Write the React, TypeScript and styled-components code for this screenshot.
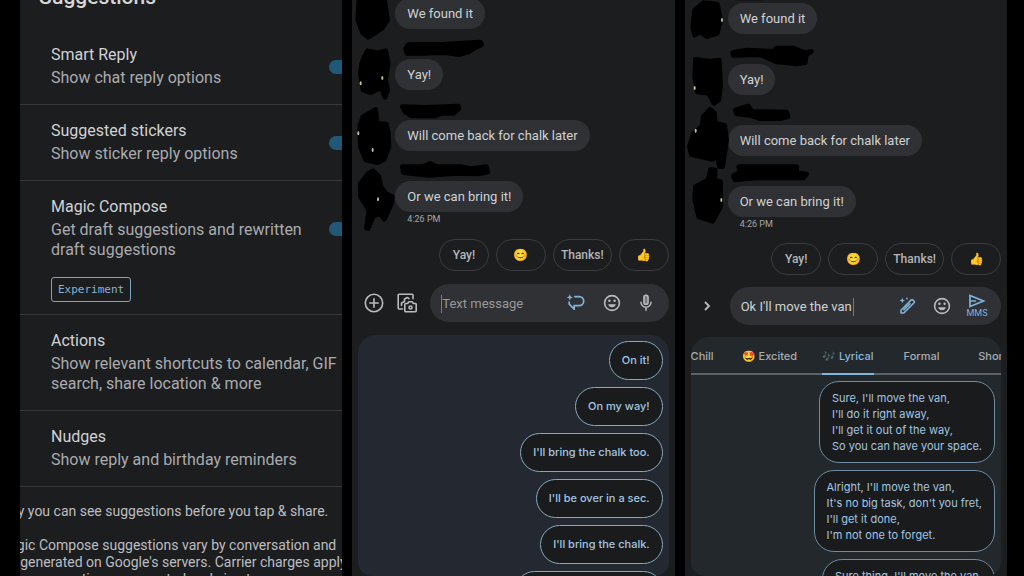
import React from "react";
import styled, { createGlobalStyle, css } from "styled-components";

const GlobalStyle = createGlobalStyle`
  *, *::before, *::after { box-sizing: border-box; }
  body { margin: 0; background: #000; }
  button, input { font: inherit; color: inherit; margin: 0; }
`;

const sans = `Roboto, "Liberation Sans", sans-serif`;
const rounded = `Inter, Roboto, sans-serif`;

const Screens = styled.main`
  display: grid;
  grid-template-columns: repeat(3, minmax(0, 1fr));
  gap: 10px;
  height: 100vh;
  padding: 0 17px 0 20px;
  overflow: hidden;
  font-family: ${sans};
`;

const Pane = styled.section`
  position: relative;
  display: flex;
  flex-direction: column;
  min-height: 0;
  overflow: hidden;
  background: #1c1d1f;
`;

/* ---------- settings ---------- */

const Heading = styled.h1`
  display: flex;
  align-items: flex-end;
  flex: none;
  height: 11px;
  margin: 0 0 18px;
  padding-left: 19px;
  font: 500 21px/28px ${sans};
  color: #d4d6d9;
`;

const Setting = styled.div<{ $tagged?: boolean }>`
  flex: none;
  padding: 16px 0 ${(p) => (p.$tagged ? 12 : 16)}px 31px;
  border-bottom: 1px solid #36383a;
`;

const SettingHead = styled.div`
  display: flex;
  align-items: center;
`;

const SettingText = styled.label`
  flex: 1;
  display: flex;
  flex-direction: column;
  gap: 3px;
  min-width: 0;
`;

const SettingTitle = styled.span`
  font-size: 16px;
  line-height: 20px;
  color: #d0d2d5;
`;

const SettingNote = styled.span`
  font-size: 16px;
  line-height: 20px;
  color: #a9abae;
`;

const Switch = styled.input`
  appearance: none;
  flex: none;
  width: 31px;
  height: 14px;
  margin-right: -18px;
  border-radius: 7px;
  background: #215877;
`;

const Tag = styled.span`
  display: inline-block;
  margin-top: 17px;
  padding: 0 6px;
  border: 1px solid #7ea3bd;
  border-radius: 3px;
  font: 11px/23px "DejaVu Sans Mono", monospace;
  color: #86b3d3;
`;

const Footnote = styled.div`
  flex: none;
  margin: 16px -60px 0 -23px;
  font-size: 14px;
  line-height: 17px;
  color: #bcbec1;
  white-space: nowrap;

  p { margin: 0 0 17px; }
`;

/* ---------- conversation ---------- */

const Thread = styled.ul<{ $scrolled: number }>`
  flex: none;
  display: flex;
  flex-direction: column;
  align-items: flex-start;
  gap: 30px;
  margin: ${(p) => -p.$scrolled}px 0 0;
  padding: 0 0 0 43px;
  list-style: none;
`;

const Bubble = styled.li`
  padding: 0 12px;
  border-radius: 16px;
  background: #303134;
  font-size: 13px;
  line-height: 31px;
  color: #cfd1d4;
`;

const Time = styled.time`
  flex: none;
  margin-top: 1px;
  padding-left: 55px;
  font-size: 9px;
  line-height: 13px;
  color: #a5a7aa;
`;

const Redaction = styled.svg`
  position: absolute;
  top: 0;
  left: 0;
  width: 322px;
  height: 234px;
  fill: #000;
  stroke: #000;
  stroke-width: 14;
  stroke-linejoin: round;
`;

const Footer = styled.div<{ $gap: number }>`
  flex: 1;
  display: flex;
  flex-direction: column;
  gap: ${(p) => p.$gap}px;
  min-height: 0;
  padding: ${(p) => p.$gap}px 6px 0;
`;

const Chips = styled.div`
  flex: none;
  display: flex;
  justify-content: flex-end;
  gap: 7px;
`;

const Chip = styled.button`
  min-width: 50px;
  height: 32px;
  padding: 0 7px;
  border: 1px solid #3a3c3f;
  border-radius: 16px;
  background: transparent;
  font: 500 12px/16px ${sans};
  color: #b4b6b9;
`;

const Composer = styled.form`
  flex: none;
  display: flex;
  align-items: center;
  gap: 13px;
  padding-left: 6px;
`;

const IconButton = styled.button<{ $width?: number; $accent?: boolean }>`
  flex: none;
  display: flex;
  flex-direction: column;
  align-items: center;
  width: ${(p) => p.$width ?? 20}px;
  padding: 0;
  border: 0;
  background: none;
  color: ${(p) => (p.$accent ? "#7fb4dc" : "#b9bbbe")};
  font: 9px/10px ${sans};

  svg { display: block; flex: none; }
`;

const Field = styled.div<{ $gap: number }>`
  flex: 1;
  display: flex;
  align-items: center;
  gap: ${(p) => p.$gap}px;
  min-width: 0;
  height: 38px;
  padding: 0 ${(p) => p.$gap - 1}px 0 11px;
  border-radius: 19px;
  background: #303134;
`;

const FieldText = styled.div`
  flex: 1;
  min-width: 0;
`;

const caretEdge = css`1px solid #77797c`;

const MessageInput = styled.input<{ $caret: "start" | "end" }>`
  width: ${(p) => (p.$caret === "start" ? "100%" : "113px")};
  height: 18px;
  padding: 0;
  border: 0;
  ${(p) => (p.$caret === "start" ? css`border-left: ${caretEdge};` : css`border-right: ${caretEdge};`)}
  outline: 0;
  background: none;
  font: 13px/18px ${sans};
  color: #cfd1d4;

  &::placeholder { color: #96989b; opacity: 1; }
`;

/* ---------- suggestion sheet ---------- */

const Sheet = styled.div<{ $tint: string }>`
  flex: 1;
  min-height: 0;
  overflow: hidden;
  border-radius: 18px 18px 14px 14px;
  background: ${(p) => p.$tint};
`;

const Replies = styled.div`
  display: flex;
  flex-direction: column;
  align-items: flex-end;
  gap: 7px;
  padding: 6px 6px 0;
`;

const Reply = styled.button`
  flex: none;
  padding: 10px 12px;
  border: 1px solid #86a8be;
  border-radius: 20px;
  background: #1a1b1d;
  font: 500 11px/17px ${rounded};
  color: #a3c6e0;
  text-align: left;
`;

const Verse = styled(Reply)`
  padding: 8px 12px;
  border-color: #6f8ca1;
  font: 11px/16px ${rounded};
  white-space: pre-line;
`;

const Tabs = styled.div`
  display: flex;
  gap: 25px;
  height: 38px;
  border-bottom: 2px solid #5b6166;
`;

const Tab = styled.button<{ $active?: boolean; $lead?: boolean }>`
  flex: none;
  min-width: 46px;
  height: 38px;
  margin-left: ${(p) => (p.$lead ? -20 : 0)}px;
  padding: 2px 0 0;
  border: 0;
  border-bottom: 2px solid ${(p) => (p.$active ? "#7fb4dc" : "transparent")};
  background: none;
  font: 500 11px/16px ${rounded};
  color: ${(p) => (p.$active ? "#8bb9dc" : "#a9acaf")};
  white-space: nowrap;
`;

const Dim = styled.span`
  opacity: 0.8;
`;

/* ---------- icons ---------- */

const stroke = { fill: "none", stroke: "currentColor", strokeLinecap: "round", strokeLinejoin: "round" } as const;

const PlusIcon = () => (
  <svg width="20" height="20" viewBox="0 0 20 20" {...stroke} strokeWidth="1.6">
    <circle cx="10" cy="10" r="8.7" />
    <path d="M10 5.8v8.4M5.8 10h8.4" />
  </svg>
);

const GalleryIcon = () => (
  <svg width="20" height="20" viewBox="0 0 20 20" {...stroke} strokeWidth="1.6">
    <path d="M5.5 16H2.2a1 1 0 0 1-1-1V2.200a1 1 0 0 1 1-1H15a1 1 0 0 1 1 1v3.500" />
    <path d="M4.500 12.500V10l3-1.500V6l3-1.500 1.500 1.200" />
    <path d="M8.500 10.500h2.200l1-1.700h3.600l1 1.700h2.200a.7.7 0 0 1 .7.7v6.800a.7.7 0 0 1-.7.7h-10a.7.7 0 0 1-.7-.7v-6.800a.7.7 0 0 1 .7-.7z" fill="#1c1d1f" />
    <circle cx="13.500" cy="14.500" r="1.500" />
  </svg>
);

const MagicReplyIcon = () => (
  <svg width="20" height="20" viewBox="0 0 20 20" {...stroke} strokeWidth="1.700">
    <path d="M8.800 3.600h4.400a4.500 4.500 0 0 1 0 9H8.200v3.600L3.200 11.200V9.200" />
    <path d="M3.800 1.200 4.700 3.500 7 4.400 4.700 5.300 3.800 7.600 2.900 5.300.6 4.400 2.900 3.500z" fill="currentColor" stroke="none" />
  </svg>
);

const SmileIcon = () => (
  <svg width="20" height="20" viewBox="0 0 20 20" {...stroke} strokeWidth="1.600">
    <circle cx="10" cy="10" r="7.400" />
    <path d="M6.200 11.300h7.600a3.900 3.900 0 0 1-7.600 0z" fill="currentColor" stroke="none" />
    <circle cx="7.400" cy="7.800" r="1.200" fill="currentColor" stroke="none" />
    <circle cx="12.600" cy="7.800" r="1.200" fill="currentColor" stroke="none" />
  </svg>
);

const MicIcon = () => (
  <svg width="16" height="20" viewBox="0 0 16 20" {...stroke} strokeWidth="1.500">
    <rect x="5.900" y="2.300" width="4.200" height="9" rx="2.100" fill="#77797c" />
    <path d="M3 9.300a5 5 0 0 0 10 0M8 14.500v2.700" />
  </svg>
);

const ChevronIcon = () => (
  <svg width="20" height="20" viewBox="0 0 20 20" {...stroke} strokeWidth="1.800" strokeLinecap="butt" strokeLinejoin="miter">
    <path d="m8 6 4 4-4 4" />
  </svg>
);

const PencilIcon = () => (
  <svg width="20" height="20" viewBox="0 0 20 20" {...stroke} strokeWidth="1.600">
    <path d="M3 17v-2.800L13.300 3.900a1 1 0 0 1 1.400 0l1.400 1.400a1 1 0 0 1 0 1.400L5.800 17zM12 7.800l-6 6" />
    <path d="M4.300 1.700 5.100 3.700 7.100 4.500 5.100 5.300 4.300 7.300 3.500 5.300 1.500 4.500 3.500 3.700z" fill="currentColor" stroke="none" />
    <circle cx="9" cy="2.500" r="0.900" fill="currentColor" stroke="none" />
  </svg>
);

const SendIcon = () => (
  <svg width="18" height="14" viewBox="0 0 18 14" {...stroke} strokeWidth="1.700" strokeLinejoin="miter">
    <path d="M2 1.500 15.500 7 2 12.500zM2 7h5.500" />
  </svg>
);

/* ---------- data ---------- */

const messages = ["We found it", "Yay!", "Will come back for chalk later", "Or we can bring it!"];
const quickReplies = ["Yay!", "😊", "Thanks!", "👍"];
const drafts = ["On it!", "On my way!", "I'll bring the chalk too.", "I'll be over in a sec.", "I'll bring the chalk.", "I'll be there in a minute."];
const verses = [
  "Sure, I'll move the van,\nI'll do it right away,\nI'll get it out of the way,\nSo you can have your space.",
  "Alright, I'll move the van,\nIt's no big task, don't you fret,\nI'll get it done,\nI'm not one to forget.",
  "Sure thing, I'll move the van,\nI'll have it gone in no time.",
];

type SettingItem = { id: string; title: string; note: string; on?: boolean; tag?: string };

const settings: SettingItem[] = [
  { id: "smart", title: "Smart Reply", note: "Show chat reply options", on: true },
  { id: "stickers", title: "Suggested stickers", note: "Show sticker reply options", on: true },
  { id: "magic", title: "Magic Compose", note: "Get draft suggestions and rewritten draft suggestions", on: true, tag: "Experiment" },
  { id: "actions", title: "Actions", note: "Show relevant shortcuts to calendar, GIF search, share location & more" },
  { id: "nudges", title: "Nudges", note: "Show reply and birthday reminders" },
];

const firstScribbles = [
  "M42-6H118L128 60 112 84 70 112 52 98 38 60z",
  "M68 152 98 158 122 152 130 190 122 240 128 270 120 292 108 262 78 278 54 270 46 220 50 190 58 170z",
  "M92 328 96 370 124 372 130 400 132 440 118 478 98 488 62 480 46 440 44 380 54 350z",
  "M84 512 102 530 108 560 122 580 142 590 140 610 118 658 104 640 84 650 70 686 64 684 72 630 46 590 46 550 70 520z",
  "M190 134 300 132 406 126 410 134 390 144 370 156 340 164 300 158 230 160 186 160 182 146z",
  "M172 320 240 322 340 318 342 326 325 340 290 340 270 348 200 348 180 336z",
  "M172 500 235 500 255 490 275 500 350 500 380 506 424 500 428 516 400 522 340 520 250 526 175 518z",
];

const secondScribbles = [
  "M70 8 112 12 122 60 112 100 80 110 60 96 44 106 38 80 44 30z",
  "M46 178 90 184 118 180 122 260 116 300 102 310 86 280 52 276 44 230z",
  "M90 328 104 340 106 370 134 376 140 420 128 500 118 500 112 470 96 478 34 464 28 440 40 400 66 380 70 350z",
  "M92 508 106 510 104 540 122 545 122 620 98 664 56 650 44 600 46 560 84 540z",
  "M170-6H240z",
  "M158 158 200 150 280 154 290 144 340 144 375 158 394 154 378 166 376 188 350 192 290 186 240 164 160 166z",
  "M166 330 205 318 215 334 320 336 324 350 300 356 240 356 210 346 170 342z",
  "M176 500 350 500 350 516 380 522 370 534 230 534 165 540 160 528 180 515z",
];

function Scribbles({ paths, glints, origin }: { paths: string[]; glints: number[][]; origin: number }) {
  return (
    <Redaction viewBox={`${origin} 0 966 702`} aria-hidden="true">
      {paths.map((d) => <path key={d} d={d} />)}
      {glints.map(([x, y]) => <ellipse key={`${x}-${y}`} cx={x} cy={y} rx="3" ry="6" fill="#c9bfa6" stroke="none" />)}
    </Redaction>
  );
}

function Conversation({ scrolled }: { scrolled: number }) {
  return (
    <>
      <Thread $scrolled={scrolled}>
        {messages.map((m) => <Bubble key={m}>{m}</Bubble>)}
      </Thread>
      <Time>4:26 PM</Time>
    </>
  );
}

function QuickReplies() {
  return (
    <Chips>
      {quickReplies.map((q) => <Chip key={q} type="button">{q}</Chip>)}
    </Chips>
  );
}

export default function App() {
  return (
    <>
      <GlobalStyle />
      <Screens>
        <Pane>
          <Heading>Suggestions</Heading>
          {settings.map((s) => (
            <Setting key={s.id} $tagged={!!s.tag}>
              <SettingHead>
                <SettingText htmlFor={s.on ? s.id : undefined} as={s.on ? "label" : "div"}>
                  <SettingTitle>{s.title}</SettingTitle>
                  <SettingNote>{s.note}</SettingNote>
                </SettingText>
                {s.on && <Switch id={s.id} type="checkbox" role="switch" defaultChecked />}
              </SettingHead>
              {s.tag && <Tag>{s.tag}</Tag>}
            </Setting>
          ))}
          <Footnote>
            <p>Only you can see suggestions before you tap &amp; share.</p>
            <p>
              Magic Compose suggestions vary by conversation and<br />
              are generated on Google's servers. Carrier charges apply.<br />
              Some suggestions are created and sign to
            </p>
          </Footnote>
        </Pane>

        <Pane>
          <Conversation scrolled={2} />
          <Scribbles paths={firstScribbles} glints={[[112, 234], [47, 250], [40, 400], [83, 450], [99, 598]]} origin={21} />
          <Footer $gap={13}>
            <QuickReplies />
            <Composer>
              <IconButton type="button" aria-label="Add"><PlusIcon /></IconButton>
              <IconButton type="button" aria-label="Gallery"><GalleryIcon /></IconButton>
              <Field $gap={16}>
                <FieldText>
                  <MessageInput $caret="start" aria-label="Message" placeholder="Text message" />
                </FieldText>
                <IconButton type="button" $accent aria-label="Magic Compose"><MagicReplyIcon /></IconButton>
                <IconButton type="button" aria-label="Emoji"><SmileIcon /></IconButton>
                <IconButton type="button" $width={16} aria-label="Voice message"><MicIcon /></IconButton>
              </Field>
            </Composer>
            <Sheet $tint="#242830">
              <Replies>
                {drafts.map((d) => <Reply key={d} type="button">{d}</Reply>)}
              </Replies>
            </Sheet>
          </Footer>
        </Pane>

        <Pane>
          <Conversation scrolled={-3} />
          <Scribbles paths={secondScribbles} glints={[[126, 60], [44, 264], [47, 392], [124, 600]]} origin={15} />
          <Footer $gap={12}>
            <QuickReplies />
            <Composer>
              <IconButton type="button" aria-label="Expand"><ChevronIcon /></IconButton>
              <Field $gap={14}>
                <FieldText>
                  <MessageInput $caret="end" aria-label="Message" defaultValue="Ok I'll move the van" />
                </FieldText>
                <IconButton type="button" $accent aria-label="Rewrite"><PencilIcon /></IconButton>
                <IconButton type="button" aria-label="Emoji"><SmileIcon /></IconButton>
                <IconButton type="button" $accent $width={22}><SendIcon />MMS</IconButton>
              </Field>
            </Composer>
            <Sheet $tint="#23282c">
              <Tabs role="tablist">
                <Tab role="tab" $lead>😎 Chill</Tab>
                <Tab role="tab">🤩 Excited</Tab>
                <Tab role="tab" $active aria-selected="true"><Dim>🎶</Dim> Lyrical</Tab>
                <Tab role="tab">Formal</Tab>
                <Tab role="tab">Short</Tab>
              </Tabs>
              <Replies>
                {verses.map((v) => <Verse key={v} type="button">{v}</Verse>)}
              </Replies>
            </Sheet>
          </Footer>
        </Pane>
      </Screens>
    </>
  );
}
